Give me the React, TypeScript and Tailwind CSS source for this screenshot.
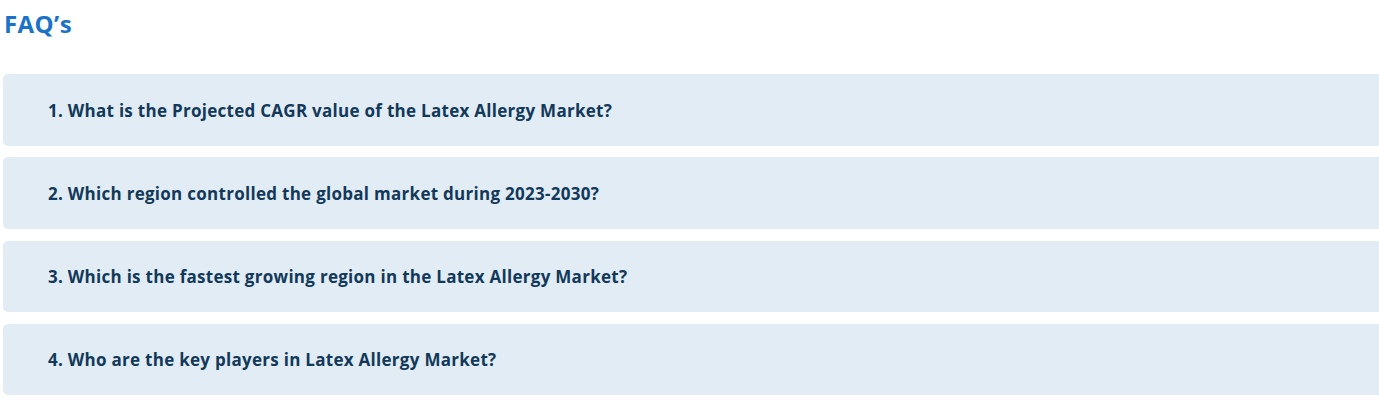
const faqs = [
  "1. What is the Projected CAGR value of the Latex Allergy Market?",
  "2. Which region controlled the global market during 2023-2030?",
  "3. Which is the fastest growing region in the Latex Allergy Market?",
  "4. Who are the key players in Latex Allergy Market?",
];

const App = () => {
  return (
    <div className="w-[1379px] h-[400px] overflow-hidden bg-white font-['Open_Sans',sans-serif]">
      <h2 className="pl-[4px] pt-[8px] text-[24px] tracking-[0.4px] leading-[32px] font-bold text-[#1a73c8]">
        FAQ’s
      </h2>
      <div className="mt-[34px] pl-[3px] flex flex-col gap-[11.8px]">
        {faqs.map((q) => (
          <div
            key={q}
            className="w-[1400px] h-[71.5px] rounded-[5px] bg-[#e2ecf5] flex items-center pl-[45px] pt-[1px]"
          >
            <span className="text-[17px] tracking-[0.28px] font-bold text-[#12395a]">{q}</span>
          </div>
        ))}
      </div>
    </div>
  );
};

export default App;
